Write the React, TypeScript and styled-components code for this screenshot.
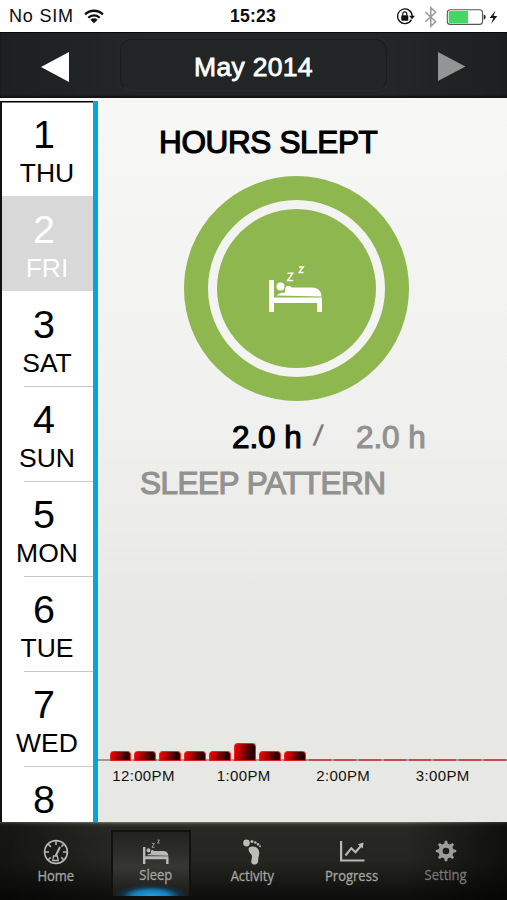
import React from "react";
import styled, { createGlobalStyle } from "styled-components";

const GlobalStyle = createGlobalStyle`
  * { box-sizing: border-box; }
  body { margin: 0; background: #000; font-family: "Liberation Sans", Arial, sans-serif; }
  svg { display: block; flex: none; }
`;

const Screen = styled.div`
  width: 507px;
  height: 900px;
  display: flex;
  flex-direction: column;
  overflow: hidden;
  background: #f6f6f4;
`;

/* ---------- status bar ---------- */

const StatusBar = styled.div`
  height: 32px;
  flex: none;
  display: grid;
  grid-template-columns: 1fr auto 1fr;
  align-items: center;
  padding: 0 8px 0 9px;
  background: #fff;
  color: #0c0c0c;
`;

const Carrier = styled.div`
  display: flex;
  align-items: center;
  gap: 10px;
  font-size: 18px;
  line-height: 33px;
  letter-spacing: 0.8px;
  white-space: pre;
`;

const Clock = styled.div`
  font-size: 17.5px;
  line-height: 33px;
  font-weight: 700;
  letter-spacing: 0.2px;
  margin-left: -2px;
`;

const StatusIcons = styled.div`
  display: flex;
  justify-content: flex-end;
`;

/* ---------- month header ---------- */

const Header = styled.header`
  height: 66px;
  flex: none;
  display: grid;
  grid-template-columns: 120px 267px 120px;
  align-items: center;
  background: linear-gradient(90deg, #1d1f20, #242728 30%, #242728 75%, #1d1f20);
  border-top: 1px solid #080808;
  box-shadow: inset 0 -2px 2px #111, 0 1px 1px #8b8b89;
`;

const Arrow = styled.button<{ $side: "left" | "right" }>`
  border: 0;
  background: none;
  padding: ${(p) => (p.$side === "left" ? "3px 0 0 41px" : "2px 0 0 51px")};
`;

const Month = styled.div`
  height: 52px;
  margin-top: -1px;
  border: 1px solid #1a1c1d;
  border-bottom-color: #2a2c2d;
  border-radius: 12px;
  background: #222526;
  color: #fff;
  font-size: 26.5px;
  line-height: 55px;
  text-align: center;
  letter-spacing: 0.3px;
  -webkit-text-stroke: 0.8px #fff;
`;

/* ---------- body ---------- */

const Body = styled.main`
  flex: 1;
  min-height: 0;
  display: flex;
  padding-top: 3px;
  background: linear-gradient(#f7f7f5, #f0f0ee 45%, #e8e8e4 70%, #e7e8e3);
`;

const Days = styled.ul`
  width: 98px;
  flex: none;
  margin: 0;
  padding: 0;
  list-style: none;
  overflow: hidden;
  background: #fff;
  border-left: 2px solid #111;
  border-right: 5px solid #05a4db;
  box-shadow: inset 0 1.5px 0 #000;
`;

const Day = styled.li<{ $selected: boolean; $line: boolean }>`
  height: 95px;
  padding-top: 9px;
  text-align: center;
  color: ${(p) => (p.$selected ? "#fff" : "#000")};
  background: ${(p) =>
    p.$selected
      ? "#d8d8d8"
      : p.$line
        ? "linear-gradient(#c6c6c6, #c6c6c6) 22px 0 / 70px 1px no-repeat"
        : "none"};
`;

const DayNumber = styled.div`
  font-size: 39.5px;
  line-height: 48px;
  padding-right: 7px;
`;

const DayName = styled.div`
  font-size: 26.5px;
  line-height: 30px;
  padding-right: 1px;
`;

const Content = styled.section`
  flex: 1;
  min-width: 0;
  display: flex;
  flex-direction: column;
`;

const Heading = styled.h1`
  margin: 22px 0 0 61px;
  height: 41px;
  font-size: 31.5px;
  line-height: 38px;
  font-weight: 400;
  letter-spacing: -0.35px;
  white-space: nowrap;
  -webkit-text-stroke: 1.2px #000;
`;

const Dial = styled.div`
  width: 225px;
  height: 225px;
  margin: 12px 0 0 86px;
  border-radius: 50%;
  border: 24px solid #8fb74f;
  padding: 9px;
  background: #f3f3f1;
`;

const DialFace = styled.div`
  width: 159px;
  height: 159px;
  border-radius: 50%;
  background: #8fb74f;
  padding: 56px 0 0 52px;
`;

const Totals = styled.div`
  display: flex;
  margin: 17px 0 0 134px;
  height: 38px;
  line-height: 38px;
  font-size: 31.5px;
  white-space: nowrap;
`;

const Amount = styled.span<{ $goal?: boolean }>`
  width: ${(p) => (p.$goal ? "auto" : "82px")};
  color: ${(p) => (p.$goal ? "#929291" : "#000")};
  letter-spacing: -0.1px;
  -webkit-text-stroke: 1.1px currentColor;
`;

const Slash = styled.span`
  width: 42px;
  font-size: 28px;
  line-height: 35px;
  color: #777;
  transform: skewX(-8deg);
  -webkit-text-stroke: 0.5px currentColor;
`;

const SubHeading = styled.h2`
  margin: 8px 0 0 42px;
  height: 38px;
  line-height: 38px;
  font-size: 31.5px;
  font-weight: 400;
  color: #929291;
  white-space: nowrap;
  letter-spacing: -0.5px;
  -webkit-text-stroke: 1.2px currentColor;
`;

const Chart = styled.div`
  margin-top: auto;
  height: 82px;
`;

const Bars = styled.div`
  height: 21px;
  display: flex;
  align-items: flex-end;
  gap: 3px;
  padding-left: 11.5px;
  overflow: hidden;
  background: linear-gradient(#9a9a96, #9a9a96) 0 100% / 100% 2px no-repeat;
`;

const Bar = styled.div<{ $height: number }>`
  width: 21.95px;
  flex: none;
  height: ${(p) => p.$height}px;
  ${(p) =>
    p.$height > 2
      ? `border: 1.5px solid #f32020;
         border-bottom: 1px solid #d52222;
         border-radius: 4px 4px 0 0;
         background: linear-gradient(100deg, #e90000 5%, #c00000 25%, #180000 85%, #4a0000);`
      : `background: #c94b4b;`}
`;

const Hours = styled.div`
  display: flex;
  padding-top: 5px;
  font-size: 15px;
  line-height: 19px;
  color: #111;
`;

const Hour = styled.span<{ $first: boolean }>`
  width: ${(p) => (p.$first ? 96 : 99.5)}px;
  padding-right: ${(p) => (p.$first ? 5 : 0)}px;
  flex: none;
  text-align: center;
  letter-spacing: 0.35px;
  white-space: nowrap;
`;

/* ---------- tab bar ---------- */

const TabBar = styled.nav`
  height: 78px;
  flex: none;
  display: flex;
  padding-top: 8px;
  background: linear-gradient(90deg, #0007, #0000 22%, #0000 80%, #0009),
    linear-gradient(#77776f 0, #3a3a36 2px, #272723 5px, #252521 50%, #0e0e0c 95%);
`;

const Tab = styled.button<{ $width: number; $selected: boolean; $dim: boolean }>`
  width: ${(p) => p.$width}px;
  height: 66px;
  flex: none;
  display: flex;
  flex-direction: column;
  align-items: center;
  margin: 0;
  padding: ${(p) => (p.$selected ? "7px 0 0 10px" : "9px 0 0")};
  border: ${(p) => (p.$selected ? "2px solid #11110f" : "0 solid transparent")};
  border-bottom: 0;
  font-family: "Open Sans", "Noto Sans", sans-serif;
  font-size: 14px;
  line-height: 20px;
  color: ${(p) => (p.$dim ? "#777773" : "#a5a5a1")};
  background: ${(p) =>
    p.$selected
      ? `radial-gradient(ellipse 38px 12px at 50% 100%, #20a0e0 0%, #1580bd 45%, #0c466b88 75%, transparent 100%),
         linear-gradient(#22221f, #363632 55%, #191917)`
      : "none"};
`;

const TabLabel = styled.span<{ $lift: boolean }>`
  margin-top: ${(p) => (p.$lift ? 0 : 1)}px;
  transform: scaleX(0.93);
  white-space: nowrap;
  -webkit-text-stroke: 0.3px currentColor;
`;

/* ---------- drawings ---------- */

const WifiIcon = () => (
  <svg width="20" height="15" viewBox="0 0 20 15" fill="none" stroke="#0c0c0c" strokeWidth="2.3">
    <path d="M1.1 5.4a12.7 12.7 0 0 1 17.8 0M4.3 8.8a8.1 8.1 0 0 1 11.4 0" />
    <path d="M6.4 10.7a5.1 5.1 0 0 1 7.2 0L10 14.2z" fill="#0c0c0c" stroke="none" />
  </svg>
);

const DeviceIcons = () => (
  <svg width="103" height="24" viewBox="396 4 103 24" fill="none">
    <path d="M411.4 18.6a7.3 7.3 0 1 1 .8-3.6" stroke="#111" strokeWidth="1.3" />
    <path d="M409.1 14.7h5.9l-3 3.5z" fill="#111" />
    <rect x="401.3" y="14.3" width="7" height="5.4" rx=".6" fill="#111" />
    <path d="M402.8 14.5v-1.7a2 2 0 0 1 4 0v1.7" stroke="#111" strokeWidth="1.2" />
    <path d="M425.4 11l10.3 9.7-4.9 4.500V6.800l4.900 4.400-10.300 9.500" stroke="#999" strokeWidth="1.5" />
    <rect x="447.3" y="8.8" width="35.2" height="14.6" rx="3" stroke="#555" strokeWidth="1.1" />
    <path d="M450 10h18v12.2h-18q-1.3 0-1.3-1.4v-9.4q0-1.4 1.3-1.4z" fill="#45d860" />
    <path d="M483.7 13.5q2 .4 2 2.6t-2 2.6z" fill="#222" />
    <path d="M495.6 9.4l-6 7.5h3.7l-2.2 6.2 6.2-8h-3.8z" fill="#151515" />
  </svg>
);

const Triangle = ({ side }: { side: "left" | "right" }) => (
  <svg width="28" height="30" viewBox="0 0 28 30">
    {side === "left" ? (
      <path d="M0 15 28 0v30z" fill="#fff" />
    ) : (
      <path d="M27.5 14.5 0 0v29z" fill="#939494" />
    )}
  </svg>
);

const SleeperIcon = ({ width, height, color }: { width: number; height: number; color: string }) => (
  <svg width={width} height={height} viewBox="0 0 54 47" preserveAspectRatio="none" fill={color}>
    <path d="M0 15h5v17.5h48V47h-5v-9H5v9H0z" />
    <circle cx="11.5" cy="21.5" r="4" />
    <path d="M8 30.6q1.2-2.7 8-3l.3-4q.5-2.8 3.2-2.8 2 0 3 1.6h20q9.5 0 10 9z" />
    <path
      d="M18.5 8.2h5.2l-5 7.3h5.5M30 2h4.2l-4 5.6h4.4"
      fill="none"
      stroke={color}
      strokeWidth="1.5"
    />
  </svg>
);

const GaugeIcon = () => (
  <svg width="26" height="26" viewBox="0 0 26 26" fill="none" stroke="#b9b9b5">
    <circle cx="13" cy="13" r="11.4" strokeWidth="1.6" />
    <path d="M13 2v4M2 13h4M20 13h4M5.2 5.2l2.7 2.7M20.8 5.2l-2.4 2.4M5.3 20.7l2.4-2.3M20.7 20.7l-2.4-2.3" strokeWidth="1.5" />
    <path d="M17 8l-4.4 9" strokeWidth="2" />
    <path d="M10.5 17h3.8l1 4.5h-5.5z" strokeWidth="1.3" />
  </svg>
);

const FootIcon = () => (
  <svg width="20" height="26" viewBox="0 0 20 26" fill="#bdbdb8">
    <ellipse cx="4.5" cy="4" rx="3.3" ry="3.4" />
    <circle cx="10" cy="2.5" r="1.5" />
    <circle cx="13.4" cy="3.5" r="1.3" />
    <circle cx="16" cy="5.2" r="1.2" />
    <circle cx="18" cy="7.2" r="1" />
    <path d="M7.5 8.2c4-2.2 9.6.3 9.7 5.3.1 3-1 4.6-1 7.6 0 3-1.3 4.5-3.6 4.5-2.6 0-3.7-1.7-3.2-4.3.5-2.8 1.3-4.2-.7-6.6-2-2.2-3-5.3-1.2-6.5z" />
  </svg>
);

const ProgressIcon = () => (
  <svg width="26" height="26" viewBox="0 0 26 26" fill="none" stroke="#b9b9b5">
    <path d="M2.1 2v19.5H25.5" strokeWidth="2.2" />
    <path d="M6.5 16.5l5.8-7.3 4.2 4 6-7" strokeWidth="2.1" />
    <path d="M18.8 5.2l5.7-1.8-.7 6z" fill="#b9b9b5" stroke="none" />
  </svg>
);

const GearIcon = () => (
  <svg width="22" height="26" viewBox="-11 -12 22 26">
    <g fill="#9c9c99">
      {[0, 45, 90, 135].map((angle) => (
        <path key={angle} transform={`rotate(${angle})`} d="M-1.8-7.500l.7-2.700h2.200l.7 2.700v15l-.7 2.700h-2.200l-.7-2.700z" />
      ))}
      <circle r="7.6" />
    </g>
    <circle r="3.3" fill="#1e1e1b" />
  </svg>
);

/* ---------- data ---------- */

const days = [
  ["1", "THU"],
  ["2", "FRI"],
  ["3", "SAT"],
  ["4", "SUN"],
  ["5", "MON"],
  ["6", "TUE"],
  ["7", "WED"],
  ["8", ""],
];

const bars = [10, 10, 10, 10, 10, 18, 10, 10, 2, 2, 2, 2, 2, 2, 2, 2];
const hours = ["12:00PM", "1:00PM", "2:00PM", "3:00PM"];

const tabs = [
  { label: "Home", width: 111, icon: <GaugeIcon /> },
  { label: "Sleep", width: 80, icon: <SleeperIcon width={26} height={25} color="#b9b9b5" /> },
  { label: "Activity", width: 122, icon: <FootIcon /> },
  { label: "Progress", width: 78, icon: <ProgressIcon /> },
  { label: "Setting", width: 110, icon: <GearIcon /> },
];

export default function App() {
  return (
    <Screen>
      <GlobalStyle />
      <StatusBar>
        <Carrier>
          <span>No SIM</span>
          <WifiIcon />
        </Carrier>
        <Clock>15:23</Clock>
        <StatusIcons>
          <DeviceIcons />
        </StatusIcons>
      </StatusBar>
      <Header>
        <Arrow $side="left" aria-label="Previous month">
          <Triangle side="left" />
        </Arrow>
        <Month>May 2014</Month>
        <Arrow $side="right" aria-label="Next month">
          <Triangle side="right" />
        </Arrow>
      </Header>
      <Body>
        <Days>
          {days.map(([number, name], i) => (
            <Day key={number} $selected={i === 1} $line={i > 2}>
              <DayNumber>{number}</DayNumber>
              <DayName>{name}</DayName>
            </Day>
          ))}
        </Days>
        <Content>
          <Heading>HOURS SLEPT</Heading>
          <Dial>
            <DialFace>
              <SleeperIcon width={54} height={47} color="#fff" />
            </DialFace>
          </Dial>
          <Totals>
            <Amount>2.0 h</Amount>
            <Slash>/</Slash>
            <Amount $goal>2.0 h</Amount>
          </Totals>
          <SubHeading>SLEEP PATTERN</SubHeading>
          <Chart>
            <Bars>
              {bars.map((height, i) => (
                <Bar key={i} $height={height} />
              ))}
            </Bars>
            <Hours>
              {hours.map((hour, i) => (
                <Hour key={hour} $first={i === 0}>
                  {hour}
                </Hour>
              ))}
            </Hours>
          </Chart>
        </Content>
      </Body>
      <TabBar>
        {tabs.map(({ label, width, icon }, i) => (
          <Tab key={label} $width={width} $selected={i === 1} $dim={i === 4}>
            {icon}
            <TabLabel $lift={i === 4}>{label}</TabLabel>
          </Tab>
        ))}
      </TabBar>
    </Screen>
  );
}
